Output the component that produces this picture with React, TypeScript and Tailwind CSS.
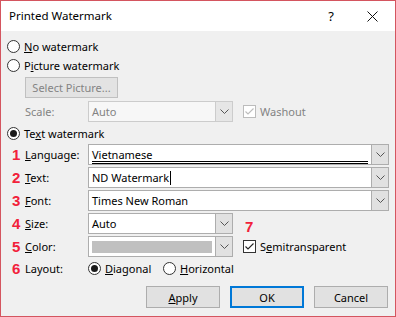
import type { ReactNode } from 'react'

// Win10 style "Printed Watermark" dialog with red annotation numbers

function Radio({ checked }: { checked?: boolean }) {
  return (
    <span className="flex h-[13px] w-[13px] shrink-0 items-center justify-center rounded-full border border-[#333333] bg-white">
      {checked && <span className="h-[7px] w-[7px] rounded-full bg-[#1a1a1a]" />}
    </span>
  )
}

function Check({ disabled }: { disabled?: boolean }) {
  return (
    <span
      className={`flex h-[13px] w-[13px] shrink-0 items-center justify-center border bg-white ${
        disabled ? 'border-[#bcbcbc]' : 'border-[#333333]'
      }`}
    >
      <svg width="11" height="11" viewBox="0 0 11 11">
        <path
          d="M1.5 5.5 L4 8 L9.5 2.5"
          fill="none"
          stroke={disabled ? '#bcbcbc' : '#222222'}
          strokeWidth="1.1"
        />
      </svg>
    </span>
  )
}

function Chevron() {
  return (
    <svg width="9" height="5" viewBox="0 0 9 5">
      <path d="M0.5 0.5 L4.5 4.5 L8.5 0.5" fill="none" stroke="#555555" strokeWidth="1" />
    </svg>
  )
}

function Combo({
  width,
  children,
  disabled,
}: {
  width: string
  children?: ReactNode
  disabled?: boolean
}) {
  return (
    <div
      className={`flex h-[21px] shrink-0 border ${width} ${
        disabled ? 'border-[#cccccc] bg-[#f7f7f7]' : 'border-[#adadad] bg-white'
      }`}
    >
      <div className="flex min-w-0 flex-1 items-center px-[3px]">{children}</div>
      <div
        className={`flex w-[17px] items-center justify-center border-l ${
          disabled ? 'border-[#cccccc] bg-[#e6e6e6]' : 'border-[#adadad] bg-[#e1e1e1]'
        }`}
      >
        <Chevron />
      </div>
    </div>
  )
}

function Num({ n }: { n: string }) {
  return (
    <span className="w-[18px] shrink-0 pl-[5px] font-['Liberation_Sans',sans-serif] text-[15px] leading-none font-bold text-[#f2213a]">
      {n}
    </span>
  )
}

function Field({ n, label, children }: { n: string; label: ReactNode; children: ReactNode }) {
  return (
    <div className="mt-[2px] flex h-[21px] items-center">
      <Num n={n} />
      <span className="w-[63px] shrink-0">{label}</span>
      {children}
    </div>
  )
}

function Btn({ children, primary }: { children: ReactNode; primary?: boolean }) {
  return (
    <div
      className={`flex h-[22px] w-[74px] items-center justify-center bg-[#e1e1e1] ${
        primary ? 'border-2 border-[#0078d7]' : 'border border-[#adadad]'
      }`}
    >
      {children}
    </div>
  )
}

export default function App() {
  return (
    <div className="flex h-[317px] w-[396px] flex-col border border-[#d4555f] bg-[#f0f0f0] font-['Segoe_UI','Noto_Sans',sans-serif] text-[11px] leading-none text-black">
      {/* title bar */}
      <div className="flex h-[30px] shrink-0 items-center bg-white pl-[8px]">
        <span className="flex-1 text-[11.5px]">Printed Watermark</span>
        <span className="mr-[33px] text-[13px]">?</span>
        <svg width="11" height="11" viewBox="0 0 11 11" className="mr-[17px]">
          <path d="M0.5 0.5 L10.5 10.5 M10.5 0.5 L0.5 10.5" stroke="#111111" strokeWidth="1" />
        </svg>
      </div>

      <div className="flex flex-1 flex-col pt-[6px] pr-[7px] pl-[6px]">
        <div className="flex h-[19px] items-center gap-[4px]">
          <Radio />
          <span>
            <span className="underline">N</span>o watermark
          </span>
        </div>
        <div className="flex h-[19px] items-center gap-[4px]">
          <Radio />
          <span>
            P<span className="underline">i</span>cture watermark
          </span>
        </div>
        <div className="mt-[2px] ml-[18px] flex h-[21px] w-[93px] items-center justify-center border border-[#c0c0c0] bg-[#e3e3e3] text-[#838383]">
          Select Picture...
        </div>
        <div className="mt-[3px] flex h-[21px] items-center text-[#838383]">
          <span className="w-[81px] shrink-0 pl-[18px]">Scale:</span>
          <Combo width="w-[145px]" disabled>
            <span className="text-[#838383]">Auto</span>
          </Combo>
          <span className="ml-[10px] flex items-center gap-[4px]">
            <Check disabled />
            <span>Washout</span>
          </span>
        </div>
        <div className="mt-[2px] flex h-[19px] items-center gap-[4px]">
          <Radio checked />
          <span>
            Te<span className="underline">x</span>t watermark
          </span>
        </div>

        <div className="mt-[1px] flex h-[21px] items-center">
          <Num n="1" />
          <span className="w-[63px] shrink-0">
            <span className="underline">L</span>anguage:
          </span>
          <Combo width="w-[301px]">
            <span className="flex h-[18px] w-full items-center border-b-[3px] border-double border-black pt-[2px]">
              Vietnamese
            </span>
          </Combo>
        </div>
        <Field
          n="2"
          label={
            <>
              <span className="underline">T</span>ext:
            </>
          }
        >
          <Combo width="w-[301px]">
            <span>ND Watermark</span>
            <span className="ml-[1px] h-[14px] w-[1px] bg-black" />
          </Combo>
        </Field>
        <Field
          n="3"
          label={
            <>
              <span className="underline">F</span>ont:
            </>
          }
        >
          <Combo width="w-[301px]">Times New Roman</Combo>
        </Field>
        <Field
          n="4"
          label={
            <>
              <span className="underline">S</span>ize:
            </>
          }
        >
          <Combo width="w-[145px]">Auto</Combo>
        </Field>
        <div className="relative">
          <span className="absolute top-[-15px] left-[238px] font-['Liberation_Sans',sans-serif] text-[15px] leading-none font-bold text-[#f2213a]">
            7
          </span>
          <Field
            n="5"
            label={
              <>
                <span className="underline">C</span>olor:
              </>
            }
          >
            <Combo width="w-[145px]">
              <span className="h-[12px] w-full bg-[#c0c0c0]" />
            </Combo>
            <span className="ml-[10px] flex items-center gap-[4px]">
              <Check />
              <span>
                S<span className="underline">e</span>mitransparent
              </span>
            </span>
          </Field>
        </div>
        <div className="mt-[2px] flex h-[19px] items-center">
          <Num n="6" />
          <span className="w-[63px] shrink-0">Layout:</span>
          <span className="flex w-[75px] items-center gap-[4px]">
            <Radio checked />
            <span>
              <span className="underline">D</span>iagonal
            </span>
          </span>
          <span className="flex items-center gap-[4px]">
            <Radio />
            <span>
              <span className="underline">H</span>orizontal
            </span>
          </span>
        </div>

        <div className="mt-[8px] flex justify-end gap-[10px]">
          <Btn>
            <span>
              <span className="underline">A</span>pply
            </span>
          </Btn>
          <Btn primary>OK</Btn>
          <Btn>Cancel</Btn>
        </div>
      </div>
    </div>
  )
}
